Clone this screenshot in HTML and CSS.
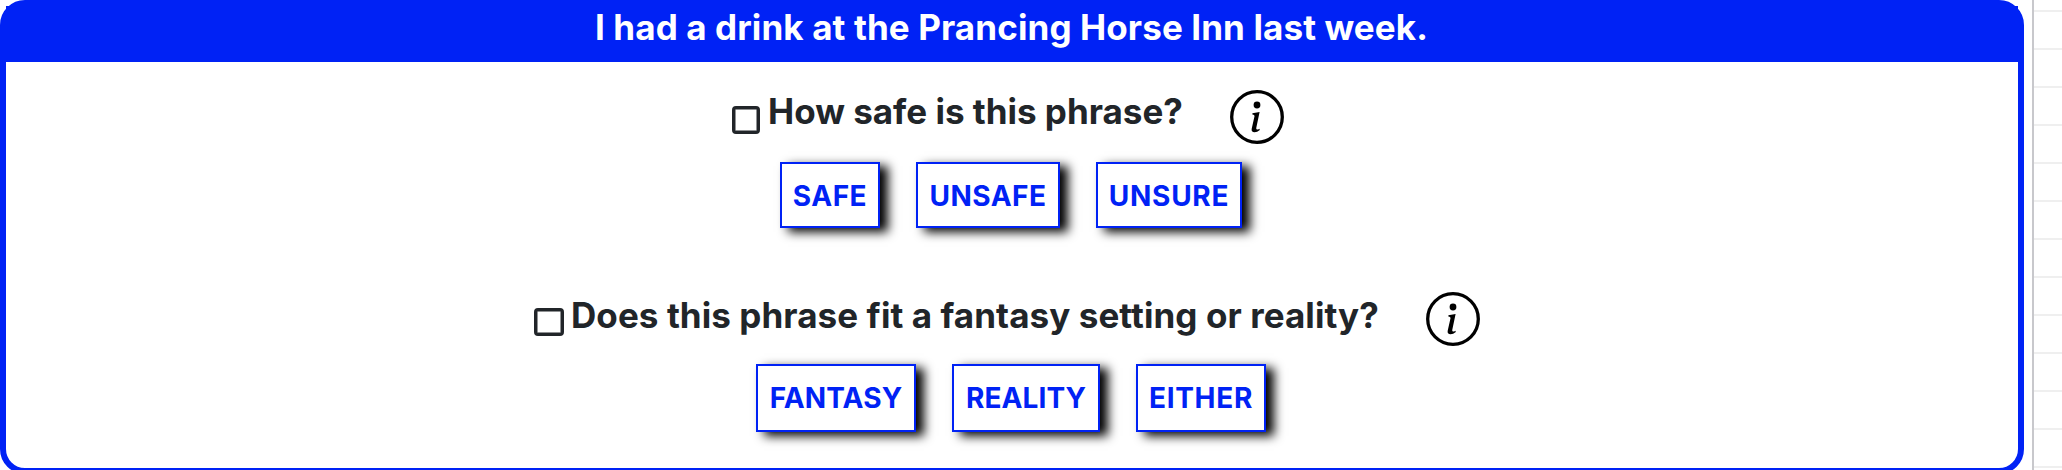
FILE: index.html
```
<!DOCTYPE html>
<html lang="en">
<head>
<meta charset="utf-8">
<title>Phrase rating</title>
<link rel="stylesheet" href="styles.css">
</head>
<body>
<svg class="defs" width="0" height="0">
  <symbol id="info" viewBox="0 0 54 54">
    <circle cx="27" cy="27" r="25.3" fill="none" stroke="#000" stroke-width="3.3"/>
    <circle cx="27" cy="15" r="3.4"/>
    <path d="M22.4 23.2L29.6 22L26.3 37.8Q25.9 39.6 27 39.6Q28.1 39.6 29.4 38.7L29.8 39.9Q27.2 42.2 24.6 42.2Q21 42.2 21.7 38.8L24.5 26.2Q24.8 24.6 22.4 24.4Z"/>
  </symbol>
</svg>
<main class="page">
  <section class="card">
    <h1 class="phrase">I had a drink at the Prancing Horse Inn last week.</h1>
    <div class="question question-safety">
      <span class="box"></span>
      <h2 class="label">How safe is this phrase?</h2>
      <svg class="info"><use href="#info"/></svg>
    </div>
    <div class="answers answers-safety">
      <button class="answer safe">SAFE</button>
      <button class="answer unsafe">UNSAFE</button>
      <button class="answer unsure">UNSURE</button>
    </div>
    <div class="question question-setting">
      <span class="box"></span>
      <h2 class="label">Does this phrase fit a fantasy setting or reality?</h2>
      <svg class="info"><use href="#info"/></svg>
    </div>
    <div class="answers answers-setting">
      <button class="answer fantasy">FANTASY</button>
      <button class="answer reality">REALITY</button>
      <button class="answer either">EITHER</button>
    </div>
  </section>
  <aside class="sheet"></aside>
</main>
</body>
</html>
```
FILE: styles.css
```
* { box-sizing: border-box; }
body { margin: 0; background: #fff; overflow: hidden; font-family: Inter, "Liberation Sans", sans-serif; }
.defs { display: block; }
.page { display: flex; width: 2062px; height: 470px; overflow: hidden; }
.card {
  flex: none;
  width: 2024px;
  height: 474px;
  border: 6px solid #0022f5;
  border-radius: 25px;
}
.phrase {
  margin: 0;
  height: 56px;
  padding-right: 1px;
  background: #0022f5;
  color: #fff;
  font-size: 35px;
  font-weight: 700;
  line-height: 42px;
  letter-spacing: 0.11px;
  text-align: center;
  white-space: nowrap;
}
.question { display: flex; align-items: flex-start; height: 54px; }
.question-safety { margin-top: 28px; padding-left: 726px; }
.question-setting { margin-top: 64px; padding-left: 528px; }
.box {
  flex: none;
  width: 28px;
  height: 28px;
  margin-top: 16px;
  border: 3px solid #212529;
  border-radius: 4px;
  box-shadow: inset 0 0 0 0.5px #212529;
}
.question-setting .box { width: 30px; }
.label {
  flex: none;
  width: 462px;
  margin: 0 0 0 8px;
  color: #212529;
  font-size: 35px;
  font-weight: 700;
  line-height: 42px;
  letter-spacing: 0;
  white-space: nowrap;
}
.question-setting .label { width: 855px; margin-left: 7px; padding-top: 2px; letter-spacing: 0.08px; }
.info { flex: none; width: 54px; height: 54px; }
.answers { display: flex; gap: 36px; margin-top: 18px; }
.answers-safety { padding-left: 774px; }
.answers-setting { padding-left: 750px; }
.answer {
  flex: none;
  height: 66px;
  padding: 1px 0 0;
  border: 2px solid #0022f5;
  background: #fff;
  box-shadow: 8px 4px 10px #000;
  color: #0022f5;
  font: 700 28px/34px Inter, "Liberation Sans", sans-serif;
  text-align: center;
  white-space: nowrap;
}
.answers-setting .answer { height: 68px; padding-top: 0; }
.safe { width: 100px; letter-spacing: 0.5px; }
.unsafe { width: 144px; letter-spacing: 0.45px; }
.unsure { width: 146px; letter-spacing: 0.7px; }
.fantasy { width: 160px; letter-spacing: 0.15px; }
.reality { width: 148px; letter-spacing: 0.1px; }
.either { width: 130px; letter-spacing: 0.7px; }
/* Spreadsheet rows showing beside the card */
.sheet {
  flex: none;
  width: 30px;
  height: 470px;
  margin-left: 8px;
  border-left: 2px solid #c8c8cc;
  background: repeating-linear-gradient(to bottom, #fff 0 10px, #efefef 10px 12px, #fff 12px 38px);
}
```
